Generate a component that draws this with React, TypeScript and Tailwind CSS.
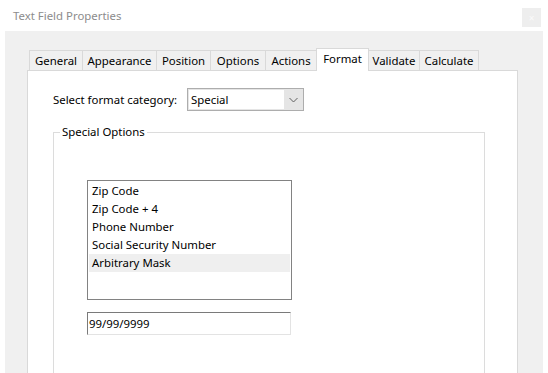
import React from 'react';

const FONT = { fontFamily: '"Noto Sans", "Open Sans", sans-serif' };

interface TabProps {
  label: string;
  width: string;
  active?: boolean;
  first?: boolean;
}

const Tab = ({ label, width, active, first }: TabProps) => {
  if (active) {
    return (
      <div
        className={`${width} -ml-px -mb-px h-[23px] relative z-10 flex items-start justify-center pt-[1px] bg-white border border-b-0 border-[#d9d9d9] text-[11.4px] text-black`}
      >
        {label}
      </div>
    );
  }
  return (
    <div
      className={`${width} ${first ? '' : '-ml-px'} h-[20px] flex items-center justify-center bg-[#f0f0f0] border border-b-0 border-[#d9d9d9] text-[11.4px] text-black`}
    >
      {label}
    </div>
  );
};

const options = ['Zip Code', 'Zip Code + 4', 'Phone Number', 'Social Security Number', 'Arbitrary Mask'];

export default function App() {
  return (
    <div className="w-[548px] h-[373px] bg-white flex flex-col overflow-hidden" style={FONT}>
      {/* title bar */}
      <div className="h-[31px] shrink-0 flex justify-between pl-[13px] pr-[7px]">
        <span className="self-center text-[11.4px] text-[#8c8c8c]">Text Field Properties</span>
        <div className="mt-[8px] w-[19px] h-[19px] bg-[#eeeeee] flex items-center justify-center text-[10px] leading-none text-[#fafafa]">
          ×
        </div>
      </div>

      {/* dialog body */}
      <div className="mx-[5px] flex-1 min-h-0 bg-[#f0f0f0] pt-[17px] pl-[22px] pr-[25px] flex flex-col overflow-hidden">
        <div className="h-[22px] shrink-0 flex items-end pl-[2px]">
          <Tab label="General" width="w-[54px]" first />
          <Tab label="Appearance" width="w-[75px]" />
          <Tab label="Position" width="w-[55px]" />
          <Tab label="Options" width="w-[56px]" />
          <Tab label="Actions" width="w-[52px]" />
          <Tab label="Format" width="w-[53px]" active />
          <Tab label="Validate" width="w-[52px]" />
          <Tab label="Calculate" width="w-[60px]" />
        </div>

        <div className="h-[330px] shrink-0 bg-white border border-[#d9d9d9] overflow-hidden">
          <div className="mt-[17px] pl-[25px] flex items-center h-[23px]">
            <span className="w-[134px] text-[11.4px] text-black">Select format category:</span>
            <div className="w-[117px] h-[23px] border border-[#adadad] bg-[#e5e5e5] flex items-center p-px">
              <div className="w-[95px] h-full bg-white flex items-center pl-[2px] text-[11.4px] text-black">Special</div>
              <div className="flex-1 flex items-center justify-center">
                <svg width="9" height="6" viewBox="0 0 9 6" fill="none">
                  <path d="M0.5 1 L4.5 5 L8.5 1" stroke="#606060" strokeWidth="1" />
                </svg>
              </div>
            </div>
          </div>

          <fieldset className="ml-[25px] mt-[13px] w-[432px] h-[320px] border border-[#dcdcdc]">
            <legend className="ml-[6px] px-[2px] text-[11.4px] leading-[16px] text-black">Special Options</legend>

            <div className="ml-[33px] mt-[40px] w-[205px] h-[120px] border border-[#828282] p-px bg-white">
              {options.map((o, i) => (
                <div
                  key={o}
                  className={`h-[18px] flex items-center pl-[3px] text-[11.4px] text-black ${i === 4 ? 'bg-[#efefef]' : ''}`}
                >
                  {o}
                </div>
              ))}
            </div>

            <div className="ml-[33px] mt-[12px] w-[204px] h-[23px] border border-t-[#7a7a7a] border-l-[#7a7a7a] border-b-[#e3e3e3] border-r-[#e3e3e3] bg-white flex items-center pl-[1px] text-[11.4px] text-black">
              99/99/9999
            </div>
          </fieldset>
        </div>
      </div>
    </div>
  );
}
